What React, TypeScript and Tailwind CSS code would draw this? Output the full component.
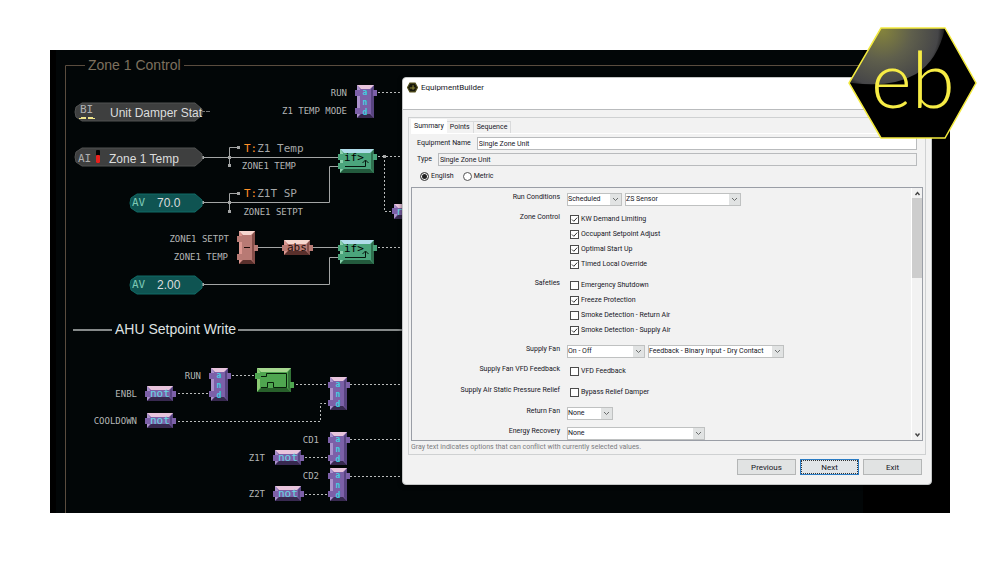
import { useState } from "react";
import type { ReactNode } from "react";

type Palette = { top: string; left: string; face: string; right: string; bottom: string };

const purple: Palette = { top: "#e8c4dc", left: "#ab92cc", face: "#7c60a8", right: "#584480", bottom: "#382950" };
const salmon: Palette = { top: "#f6d6cf", left: "#dd9790", face: "#b87a74", right: "#854e49", bottom: "#5a302c" };
const teal: Palette = { top: "#b0dcea", left: "#8bd0ac", face: "#4ba57c", right: "#30704f", bottom: "#235a3d" };
const green: Palette = { top: "#a6d890", left: "#8bca74", face: "#4fa650", right: "#327336", bottom: "#28602b" };

function Block({
  x,
  y,
  w,
  h,
  c,
  ins,
  out,
  children,
}: {
  x: number;
  y: number;
  w: number;
  h: number;
  c: Palette;
  ins: number[];
  out?: number;
  children?: ReactNode;
}) {
  const r = x + w;
  const b = y + h;
  return (
    <g>
      <rect x={x} y={y} width={w} height={h} fill={c.face} />
      <path d={`M${x} ${y}L${x + 3} ${y + 4}V${b - 4}L${x} ${b}Z`} fill={c.left} />
      <path d={`M${r} ${y}L${r - 3} ${y + 4}V${b - 4}L${r} ${b}Z`} fill={c.right} />
      <path d={`M${x} ${b}L${x + 4} ${b - 4}H${r - 4}L${r} ${b}Z`} fill={c.bottom} />
      <path d={`M${x} ${y}L${x + 4} ${y + 4}H${r - 4}L${r} ${y}Z`} fill={c.top} />
      {ins.map((p) => (
        <rect key={p} x={x - 2} y={p - 3} width={5} height={6} fill={c.face} />
      ))}
      {out !== undefined && <rect x={r - 1} y={out - 3} width={4} height={6} fill={c.face} />}
      {children}
    </g>
  );
}

function AndBlock({ x, y }: { x: number; y: number }) {
  return (
    <Block x={x} y={y} w={17} h={33} c={purple} ins={[y + 8, y + 26]} out={y + 8}>
      <g className="fill-[#3fd0e0] font-['DejaVu_Sans_Mono'] text-[8px] font-bold" textAnchor="middle">
        <text x={x + 8} y={y + 10}>a</text>
        <text x={x + 8} y={y + 20}>n</text>
        <text x={x + 8} y={y + 30}>d</text>
      </g>
    </Block>
  );
}

function NotBlock({ x, y }: { x: number; y: number }) {
  return (
    <Block x={x} y={y} w={26} h={15} c={purple} ins={[y + 8]} out={y + 8}>
      <text x={x + 3} y={y + 11} className="fill-[#66dbe4] font-['DejaVu_Sans_Mono'] text-[11px]">
        not
      </text>
    </Block>
  );
}

function IfBlock({ x, y }: { x: number; y: number }) {
  return (
    <Block x={x} y={y} w={34} h={24} c={teal} ins={[y + 8, y + 17]} out={y + 8}>
      <text x={x + 4} y={y + 12} className="fill-black font-['DejaVu_Sans_Mono'] text-[11px]">
        if&gt;
      </text>
      <path
        d={`M${x + 5} ${y + 17.5}H${x + 25.5}V${y + 11.5}M${x + 22.5} ${y + 14}L${x + 25.5} ${y + 11}L${x + 28.5} ${y + 14}`}
        stroke="#06150d"
        fill="none"
      />
    </Block>
  );
}

function Pill({ x, y, w, dark }: { x: number; y: number; w: number; dark?: boolean }) {
  return (
    <path
      d={`M${x + 7} ${y}H${x + w - 7}L${x + w} ${y + 6}V${y + 12}L${x + w - 7} ${y + 18}H${x + 7}L${x + 1} ${y + 14}L${x} ${y + 9}L${x + 1} ${y + 4}Z`}
      fill={dark ? "#3e3f3f" : "#0f5452"}
      stroke={dark ? "#515252" : "#106b66"}
    />
  );
}

const wireLabels: [string, number, number][] = [
  ["RUN", 347, 96],
  ["Z1 TEMP MODE", 347, 114],
  ["ZONE1 TEMP", 296, 169],
  ["ZONE1 SETPT", 303, 215],
  ["ZONE1 SETPT", 229, 242],
  ["ZONE1 TEMP", 228, 260],
  ["RUN", 201, 379],
  ["ENBL", 137, 397],
  ["COOLDOWN", 137, 424],
  ["CD1", 319, 443],
  ["Z1T", 265, 461],
  ["CD2", 319, 479],
  ["Z2T", 265, 497],
];

function LogicDiagram() {
  return (
    <svg viewBox="50 50 900 463" className="block h-auto w-full" role="img" aria-label="Logic program">
      <rect x={50} y={50} width={900} height={463} fill="#000" />
      <rect x={56} y={50} width={807} height={463} fill="#020607" />

      {/* group frame */}
      <path d="M85 65.5H65.5V513M184 65.5H880" stroke="#5a4c3e" fill="none" />
      <text x={88} y={70} className="fill-[#7d705e] font-['Liberation_Sans'] text-[14px]">
        Zone 1 Control
      </text>
      <path d="M73 330H112M238 330H402" stroke="#858989" strokeWidth={2} />
      <text x={115} y={334} className="fill-[#dfe1e1] font-['Liberation_Sans'] text-[14px]">
        AHU Setpoint Write
      </text>

      {/* analog wires */}
      <g stroke="#a3a5a5" fill="none">
        <path d="M202 157.5H339M202 202.5H329.5V166.5H339M202 284.5H329.5V257.5H339M255 247.5H284M311 247.5H339" />
        <path d="M229.5 166V147.5H238M229.5 211V193.5H238" />
      </g>
      <g fill="#a3a5a5">
        {[
          [237, 146],
          [228, 156],
          [228, 164],
          [237, 192],
          [228, 201],
          [228, 210],
          [201, 156],
          [201, 201],
          [201, 283],
          [383, 155],
        ].map(([x, y]) => (
          <rect key={`${x}-${y}`} x={x} y={y} width={3} height={3} />
        ))}
      </g>

      {/* binary wires */}
      <g stroke="#b9bbbb" fill="none" strokeDasharray="2 2">
        <path d="M378 92.5H403M378 156.5H403M384.5 160V211.5H391M378 247.5H403" />
        <path d="M178 393.5H209M178 421.5H320.5V403.5H328M232 375.5H254M296 384.5H328" />
        <path d="M350 384.5H403M350 439.5H403M350 476.5H403M305 457.5H328M305 494.5H328" />
      </g>
      <path d="M201 111.5H211" stroke="#777" strokeDasharray="4 1" />

      <Pill x={75} y={103} w={127} dark />
      <Pill x={75} y={148} w={127} dark />
      <Pill x={130} y={194} w={72} />
      <Pill x={130} y={276} w={72} />
      <g className="font-['DejaVu_Sans_Mono'] text-[11px]">
        <text x={80} y={113} fill="#b0b0b0">BI</text>
        <text x={78} y={162} fill="#b0b0b0">AI</text>
        <text x={132} y={206} fill="#7cc9b5">AV</text>
        <text x={132} y={288} fill="#7cc9b5">AV</text>
      </g>
      <path d="M79 118.5H86M88 118.5H95" stroke="#efe48a" />
      <path d="M81 117.5H86M88 117.5H93" stroke="#efe48a" />
      <rect x={96} y={150} width={4} height={13} rx={1} fill="#050505" />
      <rect x={96} y={155} width={4} height={8} rx={1} fill="#e8201c" />
      <g className="fill-[#dcdddd] font-['Liberation_Sans'] text-[12px]">
        <text x={110} y={117}>Unit Damper Stat</text>
        <text x={109} y={163}>Zone 1 Temp</text>
        <text x={157} y={207}>70.0</text>
        <text x={157} y={289}>2.00</text>
      </g>

      <g className="fill-[#b4b6b6] font-['DejaVu_Sans_Mono'] text-[9px]" textAnchor="end">
        {wireLabels.map(([label, x, y]) => (
          <text key={`${x}-${y}`} x={x} y={y}>{label}</text>
        ))}
      </g>
      <g className="fill-[#a5a7a7] font-['DejaVu_Sans_Mono'] text-[11px]">
        <text x={244} y={152}><tspan fill="#ff9128">T:</tspan>Z1 Temp</text>
        <text x={244} y={197}><tspan fill="#ff9128">T:</tspan>Z1T SP</text>
      </g>

      <AndBlock x={357} y={85} />
      <IfBlock x={340} y={149} />
      <Block x={394} y={204} w={26} h={15} c={purple} ins={[211]}>
        <text x={396} y={215} className="fill-[#66dbe4] font-['DejaVu_Sans_Mono'] text-[11px]">r</text>
      </Block>
      <Block x={239} y={231} w={16} h={33} c={salmon} ins={[239, 257]} out={248}>
        <path d="M244 247.5H250" stroke="#1d0b09" />
      </Block>
      <Block x={284} y={240} w={26} h={15} c={salmon} ins={[248]} out={248}>
        <text x={287} y={251} className="fill-[#1d0b09] font-['DejaVu_Sans_Mono'] text-[11px]">abs</text>
      </Block>
      <IfBlock x={340} y={240} />
      <AndBlock x={211} y={368} />
      <NotBlock x={147} y={386} />
      <NotBlock x={147} y={413} />
      <Block x={257} y={368} w={34} h={24} c={green} ins={[376]} out={385}>
        <path d="M261 376.5H266.5V373.5H286.5M261 387.5H267.5V382.5H273.5V387.5H286.5V373.5" stroke="#07200a" fill="none" />
      </Block>
      <AndBlock x={330} y={377} />
      <AndBlock x={330} y={432} />
      <AndBlock x={330} y={468} />
      <NotBlock x={275} y={450} />
      <NotBlock x={275} y={486} />
    </svg>
  );
}

function Logo() {
  return (
    <svg viewBox="0 0 130 113" className="absolute -top-6 -right-7 h-[113px] w-[130px]" role="img" aria-label="eb">
      <defs>
        <radialGradient id="gloss" gradientUnits="userSpaceOnUse" cx="34" cy="4" r="66">
          <stop offset="0" stopColor="#85843c" />
          <stop offset="0.45" stopColor="#5f5f4c" />
          <stop offset="0.85" stopColor="#464648" />
          <stop offset="1" stopColor="#000" />
        </radialGradient>
      </defs>
      <path d="M33 2H97L128 57L97 112H33L1 57Z" fill="#000" />
      <path d="M33 2H97Q90 34 68 48Q44 62 4 57L1 57Z" fill="url(#gloss)" />
      <path d="M33 2H97L128 57L97 112H33L1 57Z" fill="none" stroke="#f3ea3e" strokeWidth={1.5} />
      <text x={23} y={82} className="fill-[#f7ec45] font-['Lato'] text-[78px] font-light">
        eb
      </text>
    </svg>
  );
}

function Select({ label, value, className }: { label: string; value: string; className: string }) {
  return (
    <span className={`relative block h-[13px] ${className}`}>
      <select
        aria-label={label}
        defaultValue={value}
        className="block h-full w-full appearance-none border border-[#bfc1c1] bg-white pr-3 text-[7px] leading-[11px] outline-none"
      >
        <option>{value}</option>
      </select>
      <span className="pointer-events-none absolute inset-y-px right-px flex w-[11px] items-center justify-center bg-[#e1e3e3]">
        <svg viewBox="0 0 7 5" className="h-[5px] w-[7px]">
          <path d="M1 1L3.5 3.5L6 1" stroke="#6b6e6e" fill="none" />
        </svg>
      </span>
    </span>
  );
}

function Check({ label, checked }: { label: string; checked?: boolean }) {
  return (
    <label className="flex h-[15px] items-center gap-[2px] pl-[3px]">
      <span className="relative block size-[9px]">
        <input
          type="checkbox"
          defaultChecked={checked}
          className="peer block size-full appearance-none border border-[#4b4b4b] bg-white"
        />
        <svg viewBox="0 0 9 9" className="pointer-events-none absolute inset-0 hidden size-full peer-checked:block">
          <path d="M2 4.5L3.8 6.3L7.2 2.6" stroke="#333" fill="none" />
        </svg>
      </span>
      {label}
    </label>
  );
}

function Row({ label, children }: { label: string; children: ReactNode }) {
  return (
    <div className="grid grid-cols-[148px_1fr] gap-[7px]">
      <span className="text-right leading-[11px]">{label}</span>
      <div>{children}</div>
    </div>
  );
}

function Radio({ label, value, unit, onPick }: { label: string; value: string; unit: string; onPick: (v: string) => void }) {
  return (
    <label className="flex items-center gap-[2px]">
      <input
        type="radio"
        name="unit"
        checked={unit === value}
        onChange={() => onPick(value)}
        className="size-[9px] appearance-none rounded-full border border-[#555] bg-white checked:bg-[#222] checked:shadow-[inset_0_0_0_1px_#fff]"
      />
      {label}
    </label>
  );
}

function EquipmentBuilder() {
  const [unit, setUnit] = useState("english");

  return (
    <section className="absolute top-[27px] right-[18px] left-[352px] rounded-[4px] border border-[#c4c6c6] bg-[#f2f2f2] font-['Roboto',sans-serif] text-[7px] leading-[11px] text-[#16161e] shadow-[0_1px_4px_rgba(0,0,0,0.6)]">
      <header className="flex h-8 items-start gap-[3px] rounded-t-[4px] border-b border-[#b9bbbd] bg-white px-1 pt-1">
        <svg viewBox="0 0 10 10" className="h-[11px] w-[11px]">
          <path d="M2.6 1H7.4L9.6 5L7.4 9H2.6L0.4 5Z" fill="#17170c" stroke="#55511d" />
          <path d="M2.5 5.5H5M5.5 3V7M5.5 5.5H7.5" stroke="#8d8633" fill="none" />
        </svg>
        <h1 className="text-[8px] leading-[11px]">EquipmentBuilder</h1>
      </header>

      <div className="mx-[5px] mt-[7px] border border-[#cfd1d2] px-[2px] pt-px">
        <div className="flex items-end border-b border-white" role="tablist">
          <button role="tab" aria-selected="true" className="h-[14px] bg-white px-[3px] text-[7px]">
            Summary
          </button>
          <button role="tab" className="h-3 border border-b-0 border-l-0 border-[#d9dadb] px-[3px] text-[7px]">
            Points
          </button>
          <button role="tab" className="h-3 border border-b-0 border-l-0 border-[#d9dadb] px-[3px] text-[7px]">
            Sequence
          </button>
        </div>

        <div className="flex flex-col gap-[3px] pt-[3px] pr-[6px] pl-[6px]">
          <label className="flex items-center gap-[6px]">
            Equipment Name
            <input defaultValue="Single Zone Unit" className="h-[13px] min-w-0 flex-1 border border-[#b9bbbd] bg-white px-px" />
          </label>
          <label className="flex items-center gap-[6px]">
            Type
            <input readOnly value="Single Zone Unit" className="h-[13px] min-w-0 flex-1 border border-[#b9bbbd] bg-transparent px-px" />
          </label>
          <div className="flex h-[14px] items-center gap-[9px] pl-[3px]">
            <Radio label="English" value="english" unit={unit} onPick={setUnit} />
            <Radio label="Metric" value="metric" unit={unit} onPick={setUnit} />
          </div>
        </div>

        <div className="mt-[4px] flex h-[254px] overflow-hidden border border-[#9a9ea6]">
          <form className="flex flex-1 flex-col gap-[6px] pt-[4px]">
            <Row label="Run Conditions">
              <div className="flex h-[14px] items-center gap-[3px]">
                <Select label="Run conditions" value="Scheduled" className="w-[55px]" />
                <Select label="Sensor" value="ZS Sensor" className="w-[116px]" />
              </div>
            </Row>
            <Row label="Zone Control">
              <Check label="KW Demand Limiting" checked />
              <Check label="Occupant Setpoint Adjust" checked />
              <Check label="Optimal Start Up" checked />
              <Check label="Timed Local Override" checked />
            </Row>
            <Row label="Safeties">
              <Check label="Emergency Shutdown" />
              <Check label="Freeze Protection" checked />
              <Check label="Smoke Detection - Return Air" />
              <Check label="Smoke Detection - Supply Air" checked />
            </Row>
            <Row label="Supply Fan">
              <div className="flex h-[14px] items-center gap-[3px]">
                <Select label="Supply fan" value="On - Off" className="w-[78px]" />
                <Select label="Feedback" value="Feedback - Binary Input - Dry Contact" className="w-[136px]" />
              </div>
            </Row>
            <Row label="Supply Fan VFD Feedback">
              <Check label="VFD Feedback" />
            </Row>
            <Row label="Supply Air Static Pressure Relief">
              <Check label="Bypass Relief Damper" />
            </Row>
            <Row label="Return Fan">
              <div className="flex h-[14px] items-center">
                <Select label="Return fan" value="None" className="w-[46px]" />
              </div>
            </Row>
            <Row label="Energy Recovery">
              <div className="flex h-[14px] items-center">
                <Select label="Energy recovery" value="None" className="w-[138px]" />
              </div>
            </Row>
          </form>
          <div className="flex w-[11px] flex-col items-center border-l border-white">
            <svg viewBox="0 0 7 10" className="h-[10px] w-[7px]">
              <path d="M1.5 7L3.5 4.5L5.5 7" stroke="#444" strokeWidth={1.4} fill="none" />
            </svg>
            <div className="h-20 w-[10px] bg-[#cdcdcd]" />
            <svg viewBox="0 0 7 10" className="mt-auto h-[10px] w-[7px]">
              <path d="M1.5 3.5L3.5 6L5.5 3.5" stroke="#444" strokeWidth={1.4} fill="none" />
            </svg>
          </div>
        </div>
        <p className="pt-px pb-px text-[#7c7c80]">
          Gray text indicates options that can conflict with currently selected values.
        </p>
      </div>

      <footer className="flex justify-end gap-1 px-[9px] pt-1 pb-[9px] text-[8px]">
        <button className="h-4 w-[59px] border border-[#b4b6b6] bg-[#e1e3e3]">Previous</button>
        <button className="h-4 w-[59px] border border-[#2b7cc4] bg-[#e1e5e8] outline-1 -outline-offset-2 outline-dotted outline-[#333]">
          Next
        </button>
        <button className="h-4 w-[59px] border border-[#b4b6b6] bg-[#e1e3e3]">Exit</button>
      </footer>
    </section>
  );
}

export default function App() {
  return (
    <main className="min-h-screen bg-white p-[50px]">
      <div className="relative">
        <LogicDiagram />
        <EquipmentBuilder />
        <Logo />
      </div>
    </main>
  );
}
